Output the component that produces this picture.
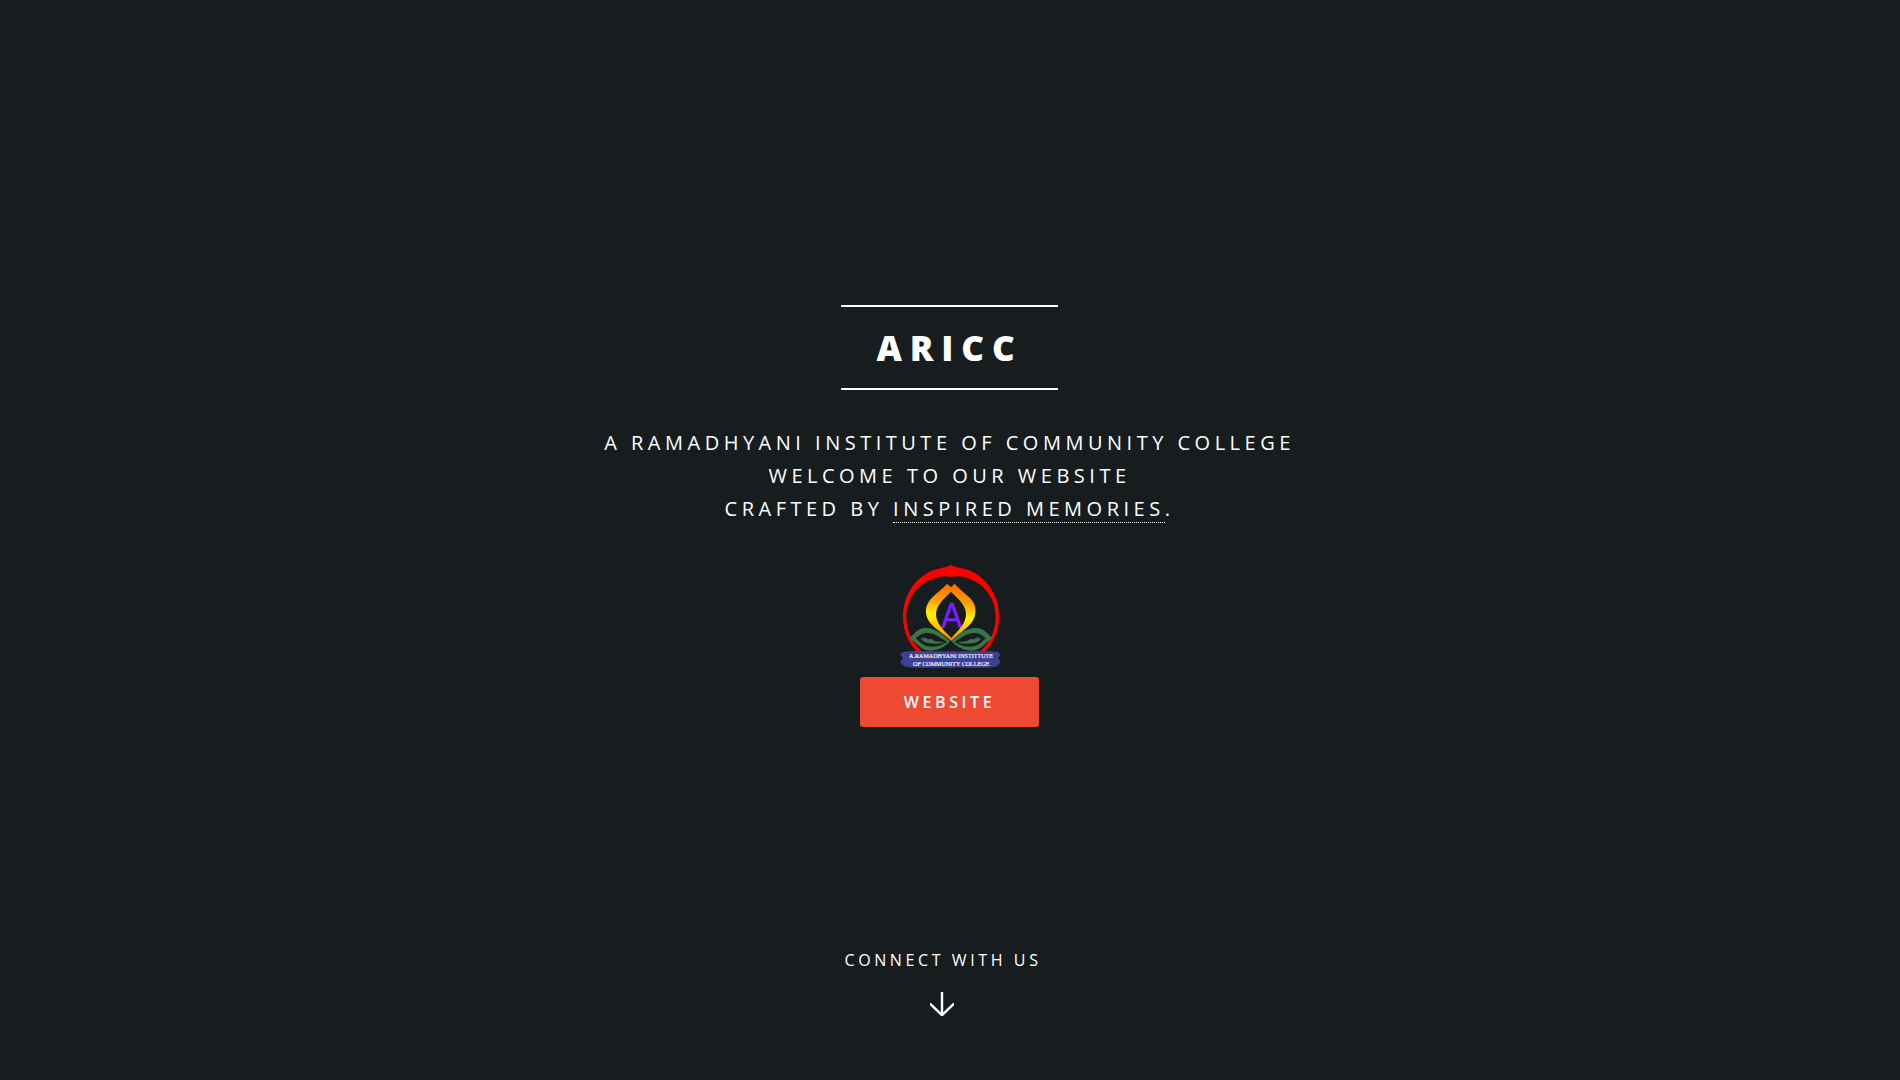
<section class="banner">
  <h2>ARICC</h2>
  <p>
    A Ramadhyani Institute of Community College<br />
    Welcome to our website<br />
    crafted by <a href="#studio">Inspired Memories</a>.
  </p>
  <svg class="logo" viewBox="0 0 360 360" role="img" aria-label="College emblem">
    <defs>
      <linearGradient id="flame" x1="0.1" y1="0" x2="0" y2="1">
        <stop offset="0" stop-color="#ff6f00" />
        <stop offset="0.28" stop-color="#ffa200" />
        <stop offset="0.52" stop-color="#fff200" />
        <stop offset="0.72" stop-color="#ffc400" />
        <stop offset="1" stop-color="#ff7200" />
      </linearGradient>
      <g id="leaf" fill="#397547">
        <path
          fill-rule="evenodd"
          d="M56 249C75 239 79 220 104 219C135 216 162 241 181 259C166 273 149 286 122 287C90 288 82 263 56 249ZM77 250C90 259 97 275 124 275C146 275 157 269 171 261C152 249 133 233 109 234C93 235 86 244 77 250Z"
        />
        <path d="M90 249L97 252L95 245L104 252L102 245L113 253L124 252L136 259L164 262C146 268 131 267 117 265C104 264 96 257 90 249Z" />
      </g>
    </defs>
    <!-- Outer ring, thick at the crown -->
    <path
      fill="#f00"
      fill-rule="evenodd"
      d="M183 29C193 37 215 38 237 46C293 69 327 125 327 185C327 230 308 271 277 296H88C57 269 39 230 39 185C39 125 73 69 129 46C151 38 171 37 183 29ZM183 67C166 61 145 64 125 73C78 92 49 134 49 185C49 230 68 266 98 292H267C298 266 317 230 317 185C317 134 288 92 241 73C221 64 200 61 183 67Z"
    />
    <text class="initial" x="185" y="220" text-anchor="middle" textLength="64" lengthAdjust="spacingAndGlyphs">A</text>
    <!-- Flame petals -->
    <path
      fill="url(#flame)"
      fill-rule="evenodd"
      d="M171 86L183 97L194 86C204 99 221 111 239 128C253 142 258 157 256 174C252 210 217 226 184 258C151 226 112 212 108 174C107 157 112 142 126 128C143 111 161 99 171 86ZM183 110C163 131 139 148 138 178C138 207 164 228 184 249C203 228 228 207 228 178C228 148 203 131 183 110Z"
    />
    <use href="#leaf" />
    <use href="#leaf" transform="translate(365 0) scale(-1 1)" />
    <!-- Name ribbon -->
    <path
      fill="#3e4095"
      d="M42 290C90 285 138 291 184 289C230 291 278 285 320 290C327 292 331 296 331 300L324 309L331 319C328 327 326 331 318 335C275 342 230 335 184 338C138 335 90 342 47 335C38 331 33 327 31 320L39 310L31 300C32 295 36 292 42 290Z"
    />
    <text class="ribbon" x="57" y="309" textLength="252" lengthAdjust="spacingAndGlyphs">A.RAMADHYANI INSTITTUTE</text>
    <text class="ribbon" x="69" y="332" textLength="229" lengthAdjust="spacingAndGlyphs">OF COMMUNITY COLLEGE</text>
  </svg>
  <a class="button" href="#website">Website</a>
  <a class="more" href="#connect">
    <span>Connect with us</span>
    <svg viewBox="0 0 24 24" aria-hidden="true">
      <path d="M12 0V23M0 11.5L12 23.2L24 11.5" fill="none" stroke="#fff" stroke-width="2.4" />
    </svg>
  </a>
</section>

<style>
  :global(body) {
    background: #171c1f;
  }

  .banner {
    box-sizing: border-box;
    height: 1080px;
    padding: 305px 1px 0 0;
    display: flex;
    flex-direction: column;
    align-items: center;
    background: #171c1f;
    color: #fff;
    font: 400 20px/33px "Open Sans", sans-serif;
    letter-spacing: 4.5px;
    text-transform: uppercase;
    text-align: center;
  }

  h2 {
    margin: 0 0 36px;
    padding: 0 35px;
    border: solid #fff;
    border-width: 2px 0;
    font-size: 35px;
    font-weight: 800;
    line-height: 81px;
    letter-spacing: 7.875px;
  }

  p {
    margin: 0 0 30px;
  }

  a {
    color: inherit;
    text-decoration: none;
  }

  p a {
    border-bottom: 1px dotted #fff;
  }

  .logo {
    display: block;
    flex: none;
    width: 120px;
    height: 120px;
    margin-left: 1px;
  }

  .initial {
    fill: #7f1fff;
    font: 400 104px Lato, sans-serif;
    stroke: #7f1fff;
    stroke-width: 1px;
    letter-spacing: 0;
  }

  .ribbon {
    fill: #f0f0fa;
    stroke: #f0f0fa;
    stroke-width: 0.6px;
    font: 400 18px "Liberation Serif", serif;
    letter-spacing: 0;
  }

  .button {
    width: 179px;
    margin-top: 2px;
    border-radius: 3px;
    background: #ed4933;
    font-size: 16px;
    font-weight: 600;
    line-height: 50px;
    letter-spacing: 3.6px;
  }

  .more {
    margin: 220px 13px 0 0;
    display: flex;
    flex-direction: column;
    align-items: center;
    font-size: 16px;
    line-height: 26px;
    letter-spacing: 3.6px;
  }

  .more svg {
    margin: 19px 2px 0 0;
    width: 24px;
    height: 24px;
  }
</style>
